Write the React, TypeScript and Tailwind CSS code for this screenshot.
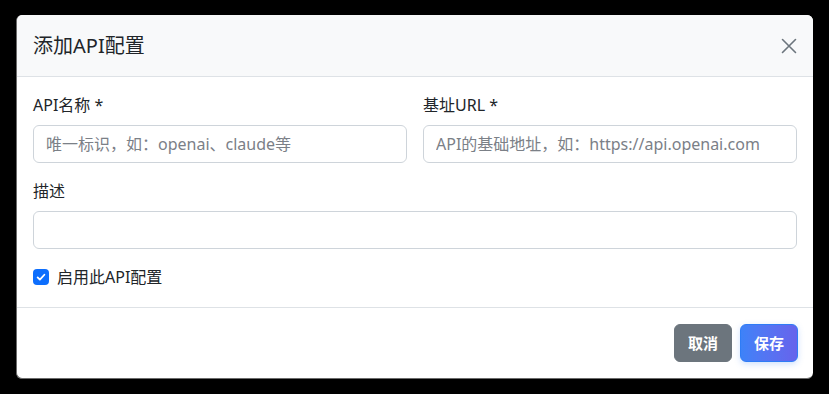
const font = "font-['Noto_Sans','Noto_Sans_CJK_SC',sans-serif]"

const Field = (props: { label: string, placeholder?: string }) => {
    const { label, placeholder } = props
    return (
        <div className="flex flex-col">
            <label className="mb-2 text-base leading-6 text-[#212529]">{label}</label>
            <input
                type="text"
                placeholder={placeholder}
                className="h-[38px] w-full rounded-md border border-[#ced4da] bg-white px-3 text-base text-[#212529] outline-none placeholder:text-[#7b8087]"
            />
        </div>
    )
}

const App = () => {
    return (
        <div className={`min-h-[394px] w-full bg-black pt-[15px] pl-[16px] ${font}`}>
            <div className="w-[797px] overflow-hidden rounded-md border-b border-l border-[#6b6b6b] bg-white">
                <div className="flex h-[62px] items-center justify-between border-b border-[#dee2e6] bg-[#f8f9fa] px-4">
                    <h5 className="text-xl leading-[30px] text-[#212529]">添加API配置</h5>
                    <button className="mr-0 flex h-4 w-4 items-center justify-center text-[#6c757d]">
                        <svg viewBox="0 0 16 16" width="16" height="16" fill="none" stroke="currentColor" strokeWidth="1.6" strokeLinecap="round">
                            <path d="M1.5 1.5l13 13M14.5 1.5l-13 13" />
                        </svg>
                    </button>
                </div>
                <div className="px-4 pt-4 pb-[18px]">
                    <div className="mb-4 grid grid-cols-2 gap-4">
                        <Field label="API名称 *" placeholder="唯一标识，如：openai、claude等" />
                        <Field label="基址URL *" placeholder="API的基础地址，如：https://api.openai.com" />
                    </div>
                    <div className="mb-4">
                        <Field label="描述" />
                    </div>
                    <label className="flex h-6 items-center gap-2 text-base text-[#212529]">
                        <span className="flex h-4 w-4 items-center justify-center rounded-[4px] bg-[#0d6efd]">
                            <svg viewBox="0 0 16 16" width="12" height="12" fill="none" stroke="white" strokeWidth="2.4" strokeLinecap="round" strokeLinejoin="round">
                                <path d="M3.5 8.5l3 3 6-6.5" />
                            </svg>
                        </span>
                        启用此API配置
                    </label>
                </div>
                <div className="flex justify-end gap-2 border-t border-[#dee2e6] px-[15px] py-4">
                    <button className="h-[38px] rounded-md border border-[#6c757d] bg-[#6c757d] px-[13px] text-[15px] font-semibold text-white">取消</button>
                    <button className="h-[38px] rounded-md border border-[#2f7cf6] bg-gradient-to-r from-[#3d82f8] to-[#6663ec] px-[13px] text-[15px] font-semibold text-white shadow-[0_2px_6px_rgba(59,130,246,0.25)]">保存</button>
                </div>
            </div>
        </div>
    )
}

export default App
